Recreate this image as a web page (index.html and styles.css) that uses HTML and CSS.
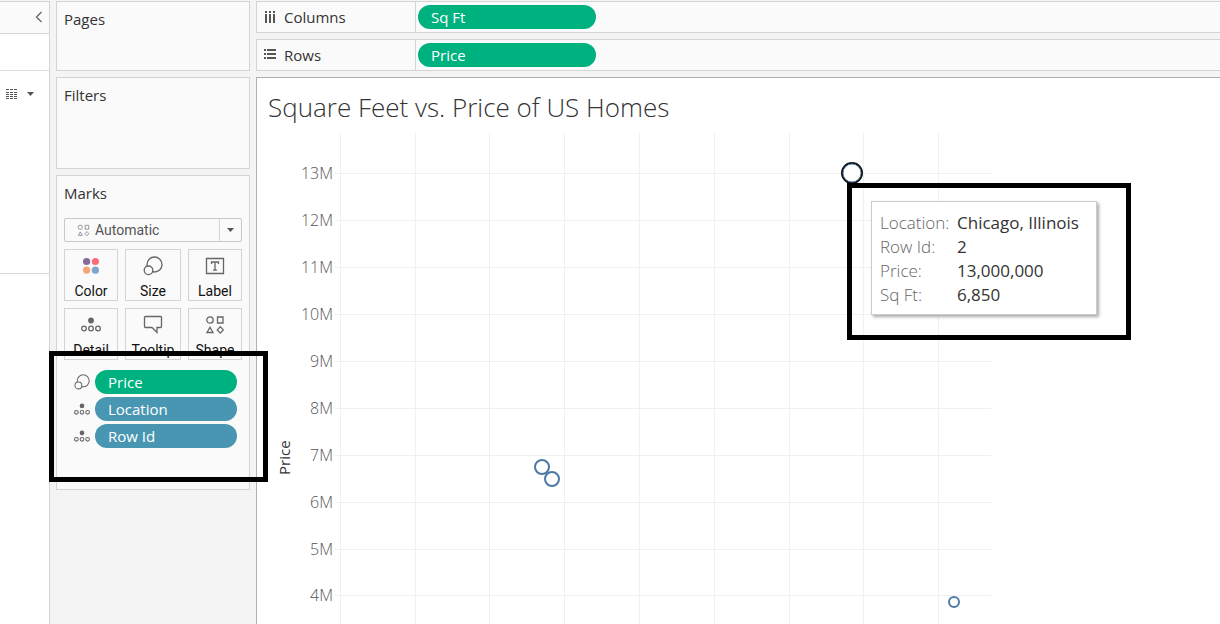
FILE: index.html
```html
<!DOCTYPE html>
<html lang="en">
<head>
<meta charset="utf-8">
<meta name="viewport" content="width=device-width, initial-scale=1">
<title>Square Feet vs. Price of US Homes</title>
<link rel="stylesheet" href="styles.css">
</head>
<body>
<svg class="symbols" aria-hidden="true">
  <symbol id="size" viewBox="0 0 20 20"><circle cx="11.500" cy="8.500" r="7.500"/><circle class="fill-card" cx="5.500" cy="14.300" r="4.300"/></symbol>
  <symbol id="detail" viewBox="0 0 20 16"><circle class="solid" cx="10" cy="3.500" r="2.900"/><circle cx="3" cy="11.500" r="2.300"/><circle cx="10" cy="11.500" r="2.300"/><circle cx="17" cy="11.500" r="2.300"/></symbol>
  <symbol id="shape" viewBox="0 0 20 20"><circle cx="5" cy="5" r="3.200"/><path d="M12.500 2h5.500v6h-5.500zM5 12.300l3 5.200H2zM15.300 11.700l3 3.200-3 3.200-3-3.200z"/></symbol>
</svg>
<div class="workspace">
  <aside class="data-pane">
    <div class="pane-head">
      <button class="plain" aria-label="Collapse pane"><svg class="icon" width="8" height="12" viewBox="0 0 8 12"><path d="M6.500 1L1.500 6l5 5"/></svg></button>
    </div>
    <div class="pane-search"></div>
    <div class="pane-fields">
      <button class="plain view-menu" aria-label="View data">
        <svg width="12" height="10" viewBox="0 0 12 10" fill="none" stroke="#555" stroke-dasharray="3 1"><path d="M0 .5h12M0 3.500h12M0 5.500h12M0 7.500h12M0 9.500h12"/></svg>
        <svg width="7" height="4" viewBox="0 0 7 4"><path fill="#555" d="M0 0h7L3.500 4z"/></svg>
      </button>
    </div>
    <div class="pane-rest"></div>
  </aside>

  <div class="cards">
    <section class="card pages"><h2>Pages</h2></section>
    <section class="card filters"><h2>Filters</h2></section>
    <section class="card marks">
      <h2>Marks</h2>
      <div class="mark-type">
        <select aria-label="Mark type"><option>Automatic</option></select>
        <svg class="icon type-icon" width="13" height="13"><use href="#shape"/></svg>
        <svg class="type-arrow" width="7" height="4" viewBox="0 0 7 4"><path fill="#555" d="M0 0h7L3.500 4z"/></svg>
      </div>
      <div class="tiles">
        <button class="tile"><svg width="20" height="20" viewBox="0 0 20 20"><circle cx="5.600" cy="5.500" r="3.600" fill="#85699b"/><circle cx="14.400" cy="5.500" r="3.600" fill="#fc6d7c"/><circle cx="5.600" cy="14.200" r="3.600" fill="#f3a678"/><circle cx="14.400" cy="14.200" r="3.600" fill="#7ea5cc"/></svg>Color</button>
        <button class="tile"><svg class="icon" width="20" height="20"><use href="#size"/></svg>Size</button>
        <button class="tile"><svg class="icon" width="20" height="20" viewBox="0 0 20 20"><path d="M1.500 2.500h17v15h-17zM6.500 8V6h7v2M10 6v8M8 14.200h4"/></svg>Label</button>
        <button class="tile"><svg class="icon" width="20" height="20" viewBox="0 0 20 20"><use href="#detail" y="2" width="20" height="16"/></svg>Detail</button>
        <button class="tile"><svg class="icon" width="20" height="20" viewBox="0 0 20 20"><path d="M2.500 1.500h15a1 1 0 0 1 1 1v9a1 1 0 0 1-1 1H14v5l-5-5H2.500a1 1 0 0 1-1-1v-9a1 1 0 0 1 1-1z"/></svg>Tooltip</button>
        <button class="tile"><svg class="icon" width="20" height="20"><use href="#shape"/></svg>Shape</button>
      </div>
      <ul class="encodings">
        <li><svg class="icon" width="16" height="16"><use href="#size"/></svg><button class="pill measure">Price</button></li>
        <li><svg class="icon" width="16" height="13"><use href="#detail"/></svg><button class="pill dimension">Location</button></li>
        <li><svg class="icon" width="16" height="13"><use href="#detail"/></svg><button class="pill dimension">Row Id</button></li>
      </ul>
      <div class="callout marks-callout"></div>
    </section>
  </div>

  <main class="main">
    <div class="shelf">
      <div class="shelf-name"><svg width="12" height="12" viewBox="0 0 12 12" fill="#555"><path d="M1 0h2v2H1zM5 0h2v2H5zM9 0h2v2H9zM1 3h2v9H1zM5 3h2v9H5zM9 3h2v9H9z"/></svg>Columns</div>
      <button class="pill measure">Sq Ft</button>
    </div>
    <div class="shelf">
      <div class="shelf-name"><svg width="12" height="12" viewBox="0 0 12 12" fill="#555"><path d="M0 0h2v2H0zM0 4h2v2H0zM0 8h2v2H0zM3 0h9v2H3zM3 4h9v2H3zM3 8h9v2H3z"/></svg>Rows</div>
      <button class="pill measure">Price</button>
    </div>
    <section class="view">
      <h1>Square Feet vs. Price of US Homes</h1>
      <div class="plot">
        <svg class="chart" width="734" height="491" viewBox="0 0 734 491" role="img" aria-label="Scatter plot of price by square feet">
          <path class="grid" d="M83.500 0v491M158.500 0v491M232.500 0v491M307.500 0v491M382.500 0v491M457.500 0v491M532.500 0v491M606.500 0v491M681.500 0v491M78 40.500h656M78 87.500h656M78 134.500h656M78 181.500h656M78 228.500h656M78 275.500h656M78 322.500h656M78 369.500h656M78 416.500h656M78 462.500h656"/>
          <g class="ticks">
            <text x="76" y="46">13M</text><text x="76" y="93">12M</text><text x="76" y="140">11M</text><text x="76" y="187">10M</text><text x="76" y="234">9M</text><text x="76" y="281">8M</text><text x="76" y="328">7M</text><text x="76" y="375">6M</text><text x="76" y="422">5M</text><text x="76" y="468">4M</text>
          </g>
          <text class="axis-title" transform="translate(33 342) rotate(-90)">Price</text>
          <g class="points">
            <circle cx="285" cy="334" r="7"/><circle cx="295" cy="346" r="7"/><circle cx="697" cy="469" r="5"/>
            <circle class="selected-edge" cx="595" cy="40" r="10"/><circle class="selected" cx="595" cy="40" r="9"/>
          </g>
        </svg>
        <div class="callout tip-callout">
          <dl class="tip">
            <dt>Location:</dt><dd>Chicago, Illinois</dd>
            <dt>Row Id:</dt><dd>2</dd>
            <dt>Price:</dt><dd>13,000,000</dd>
            <dt>Sq Ft:</dt><dd>6,850</dd>
          </dl>
        </div>
      </div>
    </section>
  </main>
</div>
</body>
</html>
```

FILE: styles.css
```css
* { box-sizing: border-box; }
body { margin: 0; background: #f4f4f4; color: #333; font: 15px/20px "Open Sans", sans-serif; }
h1, h2, ul, dl, dd { margin: 0; padding: 0; }
button, select { font: inherit; color: inherit; }
.symbols { position: absolute; width: 0; height: 0; }
.icon { fill: none; stroke: #666; stroke-width: 1.3; }
.solid { fill: #666; stroke: none; }
.fill-card { fill: #fafafa; }
.plain { display: flex; border: 0; padding: 0; background: none; }

.workspace { display: flex; gap: 6px; min-height: 100vh; padding-top: 1px; }

.data-pane { display: flex; flex-direction: column; flex: 0 0 50px; background: #fff; border: solid #d4d4d4; border-width: 1px 1px 0 0; }
.pane-head { display: flex; justify-content: flex-end; align-items: center; height: 32px; padding: 0 6px 2px 0; background: #fafafa; border-bottom: 1px solid #d4d4d4; }
.pane-search { height: 37px; border-bottom: 1px solid #e0e0e0; }
.pane-fields { height: 203px; padding: 18px 0 0 6px; border-bottom: 1px solid #d8d8d8; }
.view-menu { align-items: center; gap: 9px; }
.pane-rest { flex: 1; }

.cards { display: flex; flex-direction: column; gap: 6px; flex: 0 0 194px; }
.card { padding: 7px; background: #fafafa; border: 1px solid #d4d4d4; }
.card h2 { font-size: 15px; line-height: 20px; font-weight: 400; }
.pages { min-height: 70px; }
.filters { min-height: 92px; }
.marks { position: relative; min-height: 315px; }
.mark-type { position: relative; height: 24px; margin: 15px 0 7px; }
.mark-type select { appearance: none; width: 100%; height: 24px; padding: 0 30px; border: 1px solid #c8c8c8; border-radius: 2px; background: linear-gradient(#d4d4d4, #d4d4d4) right 21px top / 1px 100% no-repeat #fafafa; color: #555; font-family: Roboto, sans-serif; font-size: 14px; }
.type-icon { position: absolute; left: 13px; top: 6px; stroke: #888; }
.type-arrow { position: absolute; right: 8px; top: 10px; }
.tiles { display: grid; grid-template-columns: 27fr 28fr 27fr; gap: 7px; }
.tile { display: flex; flex-direction: column; align-items: center; gap: 6px; height: 52px; padding: 6px 0 0; border: 1px solid #d4d4d4; background: #fafafa; color: #111; font-family: Roboto, sans-serif; font-size: 14px; line-height: 18px; }
.tile svg { flex: none; }
.encodings { display: grid; gap: 3px; padding: 10px 5px 0 10px; list-style: none; }
.encodings li { display: flex; align-items: center; gap: 5px; }
.encodings .pill { flex: 1; }
.pill { height: 24px; padding: 0 13px; border: 0; border-radius: 12px; color: #fff; font-weight: 500; line-height: 24px; text-align: left; }
.measure { background: #00b180; }
.dimension { background: #4996b2; }

.callout { position: absolute; border: 5px solid #000; }
.marks-callout { left: -8px; top: 175px; width: 219px; height: 131px; z-index: 1; }

.main { display: flex; flex-direction: column; gap: 6px; flex: 1; min-width: 0; }
.shelf { display: flex; gap: 2px; height: 32px; border: solid #d4d4d4; border-width: 1px 0 1px 1px; background: #fafafa; }
.shelf-name { display: flex; align-items: center; gap: 8px; width: 159px; padding-left: 7px; border-right: 1px solid #d4d4d4; }
.shelf .pill { width: 178px; margin-top: 3px; }
.view { flex: 1; background: #fff; border: solid #b0b0b0; border-width: 1px 0 0 1px; }
.view h1 { height: 55px; padding: 12px 0 0 11px; font-size: 26px; line-height: 34px; font-weight: 300; }
.plot { position: relative; }
.chart { display: block; }
.grid { fill: none; stroke: #f0f0f0; }
.ticks { fill: #555; font-size: 16px; font-weight: 300; text-anchor: end; }
.axis-title { fill: #333; font-size: 15px; }
.points { fill: #fff; stroke: #4e79a7; stroke-width: 2; }
.points .selected-edge { stroke: #111; }
.points .selected { stroke-width: 1; }
.tip-callout { left: 590px; top: 50px; width: 284px; height: 157px; padding: 13px 0 0 19px; }
.tip { display: grid; grid-template-columns: 77px 1fr; width: 226px; padding: 9px 8px 7px; border: 1px solid #ccc; background: #fff; box-shadow: 2px 2px 3px #aaa; font-size: 17px; line-height: 24px; }
.tip dt { color: #666; font-weight: 300; white-space: nowrap; }
.tip dd { font-weight: 500; white-space: nowrap; }
```
